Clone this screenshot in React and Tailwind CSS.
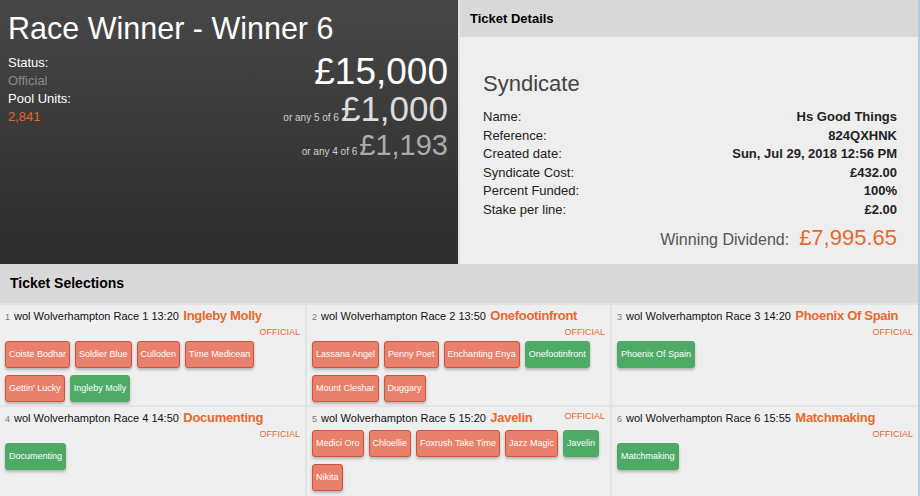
// Ticket view — race winner summary, syndicate details and selections

const RACES = [
    {
        n: 1, label: 'wol Wolverhampton Race 1 13:20', winner: 'Ingleby Molly',
        runners: ['Coiste Bodhar', 'Soldier Blue', 'Culloden', 'Time Medicean', "Gettin' Lucky", 'Ingleby Molly'],
    },
    {
        n: 2, label: 'wol Wolverhampton Race 2 13:50', winner: 'Onefootinfront',
        runners: ['Lassana Angel', 'Penny Poet', 'Enchanting Enya', 'Onefootinfront', 'Mount Cleshar', 'Duggary'],
    },
    { n: 3, label: 'wol Wolverhampton Race 3 14:20', winner: 'Phoenix Of Spain', runners: ['Phoenix Of Spain'] },
    { n: 4, label: 'wol Wolverhampton Race 4 14:50', winner: 'Documenting', runners: ['Documenting'] },
    {
        n: 5, label: 'wol Wolverhampton Race 5 15:20', winner: 'Javelin',
        runners: ['Medici Oro', 'Chloellie', 'Foxrush Take Time', 'Jazz Magic', 'Javelin', 'Nikita'],
    },
    { n: 6, label: 'wol Wolverhampton Race 6 15:55', winner: 'Matchmaking', runners: ['Matchmaking'] },
];

const DETAILS = [
    ['Name:', 'Hs Good Things'],
    ['Reference:', '824QXHNK'],
    ['Created date:', 'Sun, Jul 29, 2018 12:56 PM'],
    ['Syndicate Cost:', '£432.00'],
    ['Percent Funded:', '100%'],
    ['Stake per line:', '£2.00'],
];

const RaceCell = ({ race }) => (
    <div className="bg-[#efefef] px-[5px] pt-[2px] overflow-hidden">
        <div className="leading-[15px]">
            <span className="text-[9px] text-[#777] mr-[4px]">{race.n}</span>
            <span className="text-[11px] text-[#111]">{race.label}</span>{' '}
            <span className="text-[13px] font-bold tracking-[-0.3px] text-[#e8692c]">{race.winner}</span>
            <span className="float-right text-[9px] leading-[12px] text-[#e8692c] mt-[1px]">OFFICIAL</span>
        </div>
        <div className="clear-both flex flex-wrap gap-x-[5px] gap-y-[7px] pt-[3px]">
            {race.runners.map((r) => (
                <span
                    key={r}
                    className={`h-[27px] px-[3px] flex items-center rounded-[3px] border text-[9px] text-white shadow-[0_2px_3px_rgba(0,0,0,0.25)] ${
                        r === race.winner ? 'bg-[#4dab66] border-[#4dab66]' : 'bg-[#e9806b] border-[#c9563f]'
                    }`}
                >
                    {r}
                </span>
            ))}
        </div>
    </div>
);

export default function App() {
    return (
        <div className="w-[920px] h-[496px] overflow-hidden bg-[#e3e3e3] font-['Liberation_Sans',Arial,sans-serif] border-r-2 border-[#b6cbe0]">
            {/* === CABECERA === */}
            <div className="flex gap-[2px] h-[264px]">
                <div className="w-[458px] bg-gradient-to-b from-[#474747] to-[#2d2d2d] px-[8px] pt-[10px] text-white">
                    <h1 className="text-[30.5px] leading-[36px]">Race Winner - Winner 6</h1>
                    <div className="flex justify-between pt-[7px]">
                        <div className="text-[13px] leading-[18px] pt-[1px]">
                            <p>Status:</p>
                            <p className="text-[#8a8a8a]">Official</p>
                            <p>Pool Units:</p>
                            <p className="text-[#e0662a]">2,841</p>
                        </div>
                        <div className="flex flex-col items-end pr-[2px]">
                            <p className="text-[37px] leading-[38px]">£15,000</p>
                            <div className="flex items-baseline h-[36px] text-[#dcdcdc]">
                                <span className="text-[10px] leading-none text-[#cfcfcf] mr-[2px]">or any 5 of 6</span>
                                <span className="text-[35px] leading-[36px]">£1,000</span>
                            </div>
                            <div className="flex items-baseline h-[36px] text-[#ababab]">
                                <span className="text-[10px] leading-none text-[#cfcfcf] mr-[2px]">or any 4 of 6</span>
                                <span className="text-[29px] leading-[36px]">£1,193</span>
                            </div>
                        </div>
                    </div>
                </div>

                <div className="flex-1 flex flex-col bg-[#eeeeee]">
                    <div className="h-[37px] bg-[#d9d9d9] px-[10px] flex items-center text-[13px] font-bold text-black">
                        Ticket Details
                    </div>
                    <div className="pl-[23px] pr-[21px] pt-[34px]">
                        <h2 className="text-[22px] text-[#444] leading-[26px] mb-[11px]">Syndicate</h2>
                        {DETAILS.map(([k, v]) => (
                            <div key={k} className="flex justify-between text-[13px] leading-[18.6px] text-[#222]">
                                <span>{k}</span>
                                <span className="font-bold">{v}</span>
                            </div>
                        ))}
                        <div className="flex justify-end items-baseline gap-[10px] mt-[1px]">
                            <span className="text-[16px] text-[#555]">Winning Dividend:</span>
                            <span className="text-[22px] text-[#e8692c]">£7,995.65</span>
                        </div>
                    </div>
                </div>
            </div>

            {/* === SELECCIONES === */}
            <div className="h-[39px] bg-[#d9d9d9] px-[10px] flex items-center text-[14px] font-bold text-black">
                Ticket Selections
            </div>
            <div className="grid grid-cols-[305px_303px_1fr] grid-rows-[100px_1fr] gap-[2px] h-[193px] pt-[2px]">
                {RACES.map((race) => (
                    <RaceCell key={race.n} race={race} />
                ))}
            </div>
        </div>
    );
}
